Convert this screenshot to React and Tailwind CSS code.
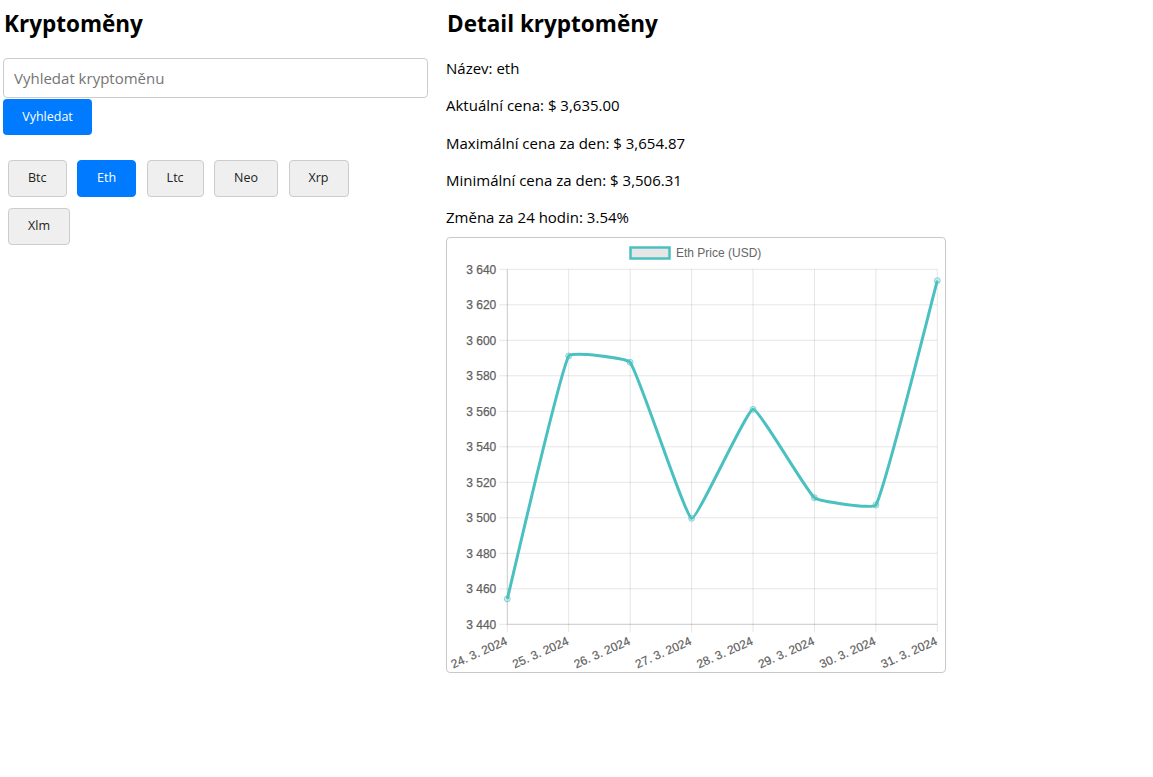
import React from "react";

const coins = ["Btc", "Eth", "Ltc", "Neo", "Xrp", "Xlm"];

const days = [
  "24. 3. 2024",
  "25. 3. 2024",
  "26. 3. 2024",
  "27. 3. 2024",
  "28. 3. 2024",
  "29. 3. 2024",
  "30. 3. 2024",
  "31. 3. 2024",
];
const prices = [3454.3, 3591.2, 3587.6, 3499.7, 3561.1, 3511.3, 3507.2, 3633.6];

// chart area in page coordinates
const left = 507.3;
const right = 937.3;
const top = 269.3;
const bottom = 624.3;
const yMax = 3640;
const yMin = 3440;

const px = (i) => left + (i * (right - left)) / (days.length - 1);
const py = (v) => top + ((yMax - v) * (bottom - top)) / (yMax - yMin);

// same spline as chart.js with tension 0.1
const buildPath = (pts, t = 0.1) => {
  const ctrl = pts.map((p, i) => {
    const prev = pts[i - 1] || p;
    const next = pts[i + 1] || p;
    const d01 = Math.hypot(p.x - prev.x, p.y - prev.y);
    const d12 = Math.hypot(next.x - p.x, next.y - p.y);
    let s01 = d01 / (d01 + d12);
    let s12 = d12 / (d01 + d12);
    if (isNaN(s01)) s01 = 0;
    if (isNaN(s12)) s12 = 0;
    const fa = t * s01;
    const fb = t * s12;
    return {
      cpPrev: { x: p.x - fa * (next.x - prev.x), y: p.y - fa * (next.y - prev.y) },
      cpNext: { x: p.x + fb * (next.x - prev.x), y: p.y + fb * (next.y - prev.y) },
    };
  });
  let d = `M${pts[0].x},${pts[0].y}`;
  for (let i = 1; i < pts.length; i++) {
    const a = ctrl[i - 1].cpNext;
    const b = ctrl[i].cpPrev;
    d += ` C${a.x},${a.y} ${b.x},${b.y} ${pts[i].x},${pts[i].y}`;
  }
  return d;
};

const PriceChart = () => {
  const pts = prices.map((v, i) => ({ x: px(i), y: py(v) }));
  const yTicks = [];
  for (let v = yMax; v >= yMin; v -= 20) yTicks.push(v);
  const fmt = (v) => `${Math.floor(v / 1000)}\u00a0${String(v % 1000).padStart(3, "0")}`;

  return (
    <div className="w-[500px] h-[436px] border border-[#c8c8c8] rounded-[4px]">
      <svg width="498" height="434" viewBox="447 238 498 434" className="block">
        {/* legend */}
        <rect x="630.5" y="247.5" width="39" height="11" fill="#e6e6e6" stroke="rgb(75,192,192)" strokeWidth="2.5" />
        <text x="676" y="257.3" fontSize="12" fill="#666" fontFamily="'Liberation Sans', Arial, sans-serif">
          Eth Price (USD)
        </text>

        {/* horizontal grid */}
        {yTicks.map((v) => (
          <g key={v}>
            <line x1={left - 8} x2={right} y1={py(v)} y2={py(v)} stroke="rgba(0,0,0,0.1)" strokeWidth="1" />
            <text
              x={left - 11}
              y={py(v) + 4.2}
              textAnchor="end"
              fontSize="12"
              fill="#5f5f5f"
              stroke="#5f5f5f"
              strokeWidth="0.25"
              fontFamily="'Liberation Sans', Arial, sans-serif"
            >
              {fmt(v)}
            </text>
          </g>
        ))}

        {/* vertical grid */}
        {days.map((d, i) => (
          <g key={d}>
            <line x1={px(i)} x2={px(i)} y1={top} y2={bottom + 8} stroke="rgba(0,0,0,0.1)" strokeWidth="1" />
            <text
              x={px(i) - 3}
              y={635.3}
              dy="9.5"
              textAnchor="end"
              fontSize="12"
              fill="#5f5f5f"
              stroke="#5f5f5f"
              strokeWidth="0.2"
              fontFamily="'Liberation Sans', Arial, sans-serif"
              transform={`rotate(-24 ${px(i) - 3} 635.3)`}
            >
              {d}
            </text>
          </g>
        ))}
        <line x1={left} x2={left} y1={top} y2={bottom} stroke="rgba(0,0,0,0.12)" />
        <line x1={left} x2={right} y1={bottom} y2={bottom} stroke="rgba(0,0,0,0.12)" />

        {/* data */}
        <path d={buildPath(pts)} fill="none" stroke="rgb(75,192,192)" strokeWidth="3" />
        {pts.map((p, i) => (
          <circle key={i} cx={p.x} cy={p.y} r="3" fill="rgba(75,192,192,0.25)" stroke="rgba(75,192,192,0.6)" strokeWidth="1" />
        ))}
      </svg>
    </div>
  );
};

export default function App() {
  const selected = "Eth";

  return (
    <div className="flex bg-white text-black min-h-[777px] font-['Open_Sans',sans-serif]">
      {/* levý sloupec */}
      <div className="w-[443px] pl-[3px]">
        <h2 className="pt-[8px] pl-[1px] text-[22.5px] leading-[32px] font-bold">Kryptoměny</h2>
        <input
          type="text"
          placeholder="Vyhledat kryptoměnu"
          className="mt-[18px] block w-[425px] h-[40px] px-[10px] text-[15px] border border-[#ccc] rounded-[4px] placeholder:text-[#757575] outline-none"
        />
        <button className="mt-[1px] block w-[89px] h-[36px] bg-[#007bff] text-white text-[12.5px] rounded-[4px]">
          Vyhledat
        </button>
        <div className="mt-[25px] pl-[5px] flex flex-wrap gap-x-[10.5px] gap-y-[11px] w-[400px]">
          {coins.map((c) => (
            <button
              key={c}
              className={`h-[37px] px-[19px] text-[12.5px] rounded-[4px] border ${
                c === selected
                  ? "bg-[#007bff] border-[#007bff] text-white"
                  : "bg-[#efefef] border-[#ccc] text-[#222]"
              }`}
            >
              {c}
            </button>
          ))}
        </div>
      </div>

      {/* pravý sloupec */}
      <div className="pl-[3px]">
        <h2 className="pt-[8px] pl-[1px] text-[22.5px] leading-[32px] font-bold">Detail kryptoměny</h2>
        <div className="mt-[18px] text-[15px] leading-[21px] space-y-[16.3px]">
          <p>Název: eth</p>
          <p>Aktuální cena: $ 3,635.00</p>
          <p>Maximální cena za den: $ 3,654.87</p>
          <p>Minimální cena za den: $ 3,506.31</p>
          <p>Změna za 24 hodin: 3.54%</p>
        </div>
        <div className="mt-[9px]">
          <PriceChart />
        </div>
      </div>
    </div>
  );
}
